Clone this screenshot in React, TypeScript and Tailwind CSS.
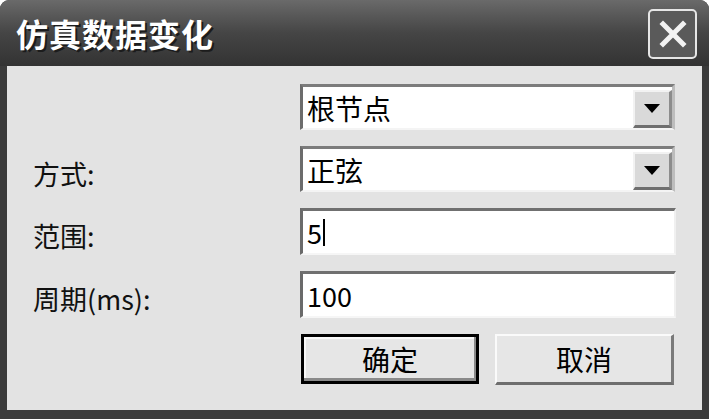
import React from "react";

const font = "font-['Noto_Sans_CJK_SC','Noto_Sans_CJK_JP',sans-serif]";

const DropButton = () => (
  <div className="w-[39px] self-stretch mt-[3px] bg-[#d9d9d9] border-t-2 border-l-2 border-t-[#f2f2f2] border-l-[#f2f2f2] border-b-[3px] border-r-[3px] border-b-[#6e6e6e] border-r-[#8c8c8c] flex items-center justify-center">
    <svg width="16" height="9" viewBox="0 0 16 9">
      <path d="M0 0h16L8 9z" fill="#000" />
    </svg>
  </div>
);

const Combo = ({ value }: { value: string }) => (
  <div className="h-[46px] w-[375px] bg-white border-t-[3px] border-l-[3px] border-t-[#7c7c7c] border-l-[#6c6c6c] border-r-[3px] border-r-[#bdbdbd] border-b-2 border-b-[#f4f4f4] flex items-stretch">
    <div className="flex-1 flex items-center pl-[4px] text-[28px] leading-none text-black">{value}</div>
    <DropButton />
  </div>
);

const Field = ({ children }: { children: React.ReactNode }) => (
  <div className="h-[47px] w-[376px] bg-white border-t-[3px] border-l-[3px] border-t-[#707070] border-l-[#6a6a6a] border-r-2 border-r-[#f0f0f0] border-b-2 border-b-[#f6f6f6] flex items-center pl-[4px] text-[27px] leading-none text-black">
    {children}
  </div>
);

const Label = ({ text }: { text: string }) => (
  <div className="pl-[26px] flex items-center pt-[8px] text-[27px] leading-none text-[#111]">{text}</div>
);

export default function App() {
  return (
    <div className={`w-[709px] h-[419px] bg-[#3b3b3b] rounded-t-[9px] flex flex-col overflow-hidden ${font}`}>
      <div className="h-[66px] shrink-0 flex items-center justify-between pl-[16px] pr-[12px] bg-gradient-to-b from-[#6a6a6a] via-[#454545] to-[#333333]">
        <span className="text-[32px] font-bold leading-none text-white tracking-[1px] [text-shadow:2px_2px_0_#1c1c1c]">
          仿真数据变化
        </span>
        <div className="w-[49px] h-[50px] mt-[2px] rounded-[5px] border-2 border-[#e6e6e6] bg-[#5a5a5a] flex items-center justify-center">
          <svg width="30" height="30" viewBox="0 0 30 30">
            <path d="M5 5L25 25M25 5L5 25" stroke="#f2f2f2" strokeWidth="5" strokeLinecap="square" />
          </svg>
        </div>
      </div>
      <div className="flex-1 mx-[7px] mb-[9px] bg-[#e3e3e3] pt-[18px] grid grid-cols-[293px_376px] auto-rows-min gap-y-[16px]">
        <div />
        <Combo value="根节点" />
        <Label text="方式:" />
        <Combo value="正弦" />
        <Label text="范围:" />
        <Field>
          <span>5</span>
          <span className="w-[2px] h-[27px] bg-black ml-[1px]" />
        </Field>
        <Label text="周期(ms):" />
        <Field>100</Field>
        <div />
        <div className="flex gap-[16px] pl-[1px]">
          <button className="w-[178px] h-[50px] bg-[#e6e6e6] border-[3px] border-black shadow-[inset_-2px_-3px_0_#8a8a8a,inset_2px_2px_0_#f8f8f8] text-[28px] leading-none text-black">
            确定
          </button>
          <button className="w-[179px] h-[51px] bg-[#e6e6e6] border-t-2 border-l-2 border-t-[#fafafa] border-l-[#fafafa] border-r-[3px] border-b-[3px] border-r-[#7a7a7a] border-b-[#6e6e6e] text-[28px] leading-none text-black">
            取消
          </button>
        </div>
      </div>
    </div>
  );
}
